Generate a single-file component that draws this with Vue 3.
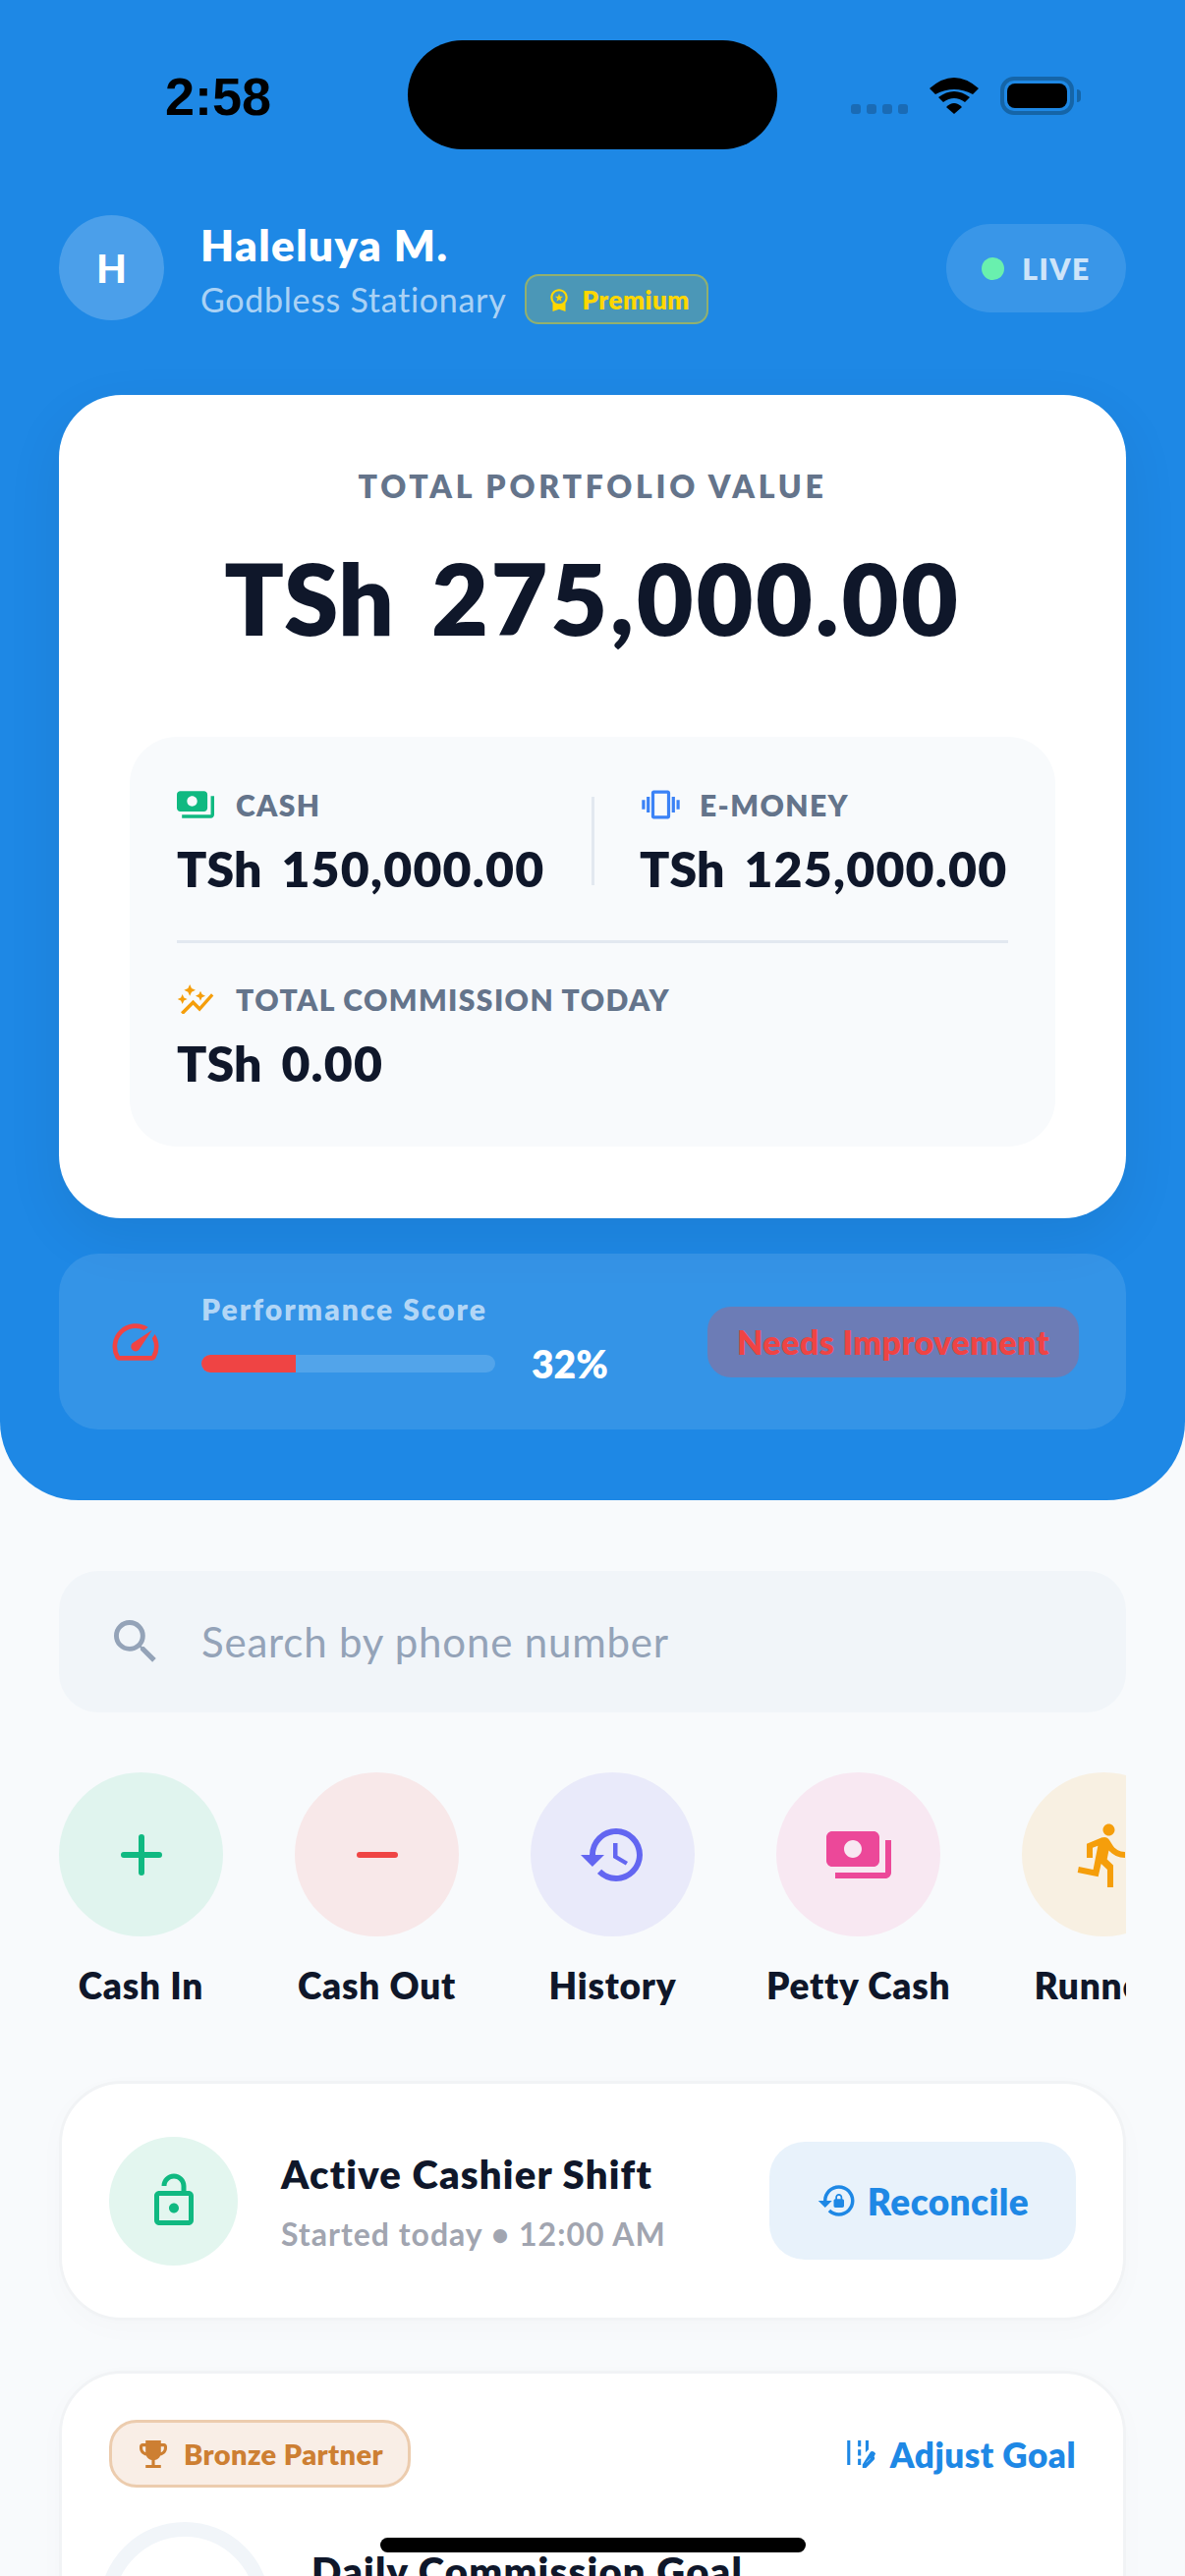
<script setup>
const actions = [
  { label: 'Cash In', kind: 'in' },
  { label: 'Cash Out', kind: 'out' },
  { label: 'History', kind: 'history' },
  { label: 'Petty Cash', kind: 'petty' },
  { label: 'Runners', kind: 'runner' }
]
const paths = {
  history: 'M13 3a9 9 0 0 0-9 9H1l3.89 3.89.07.14L9 12H6c0-3.87 3.13-7 7-7s7 3.13 7 7-3.13 7-7 7c-1.93 0-3.68-.79-4.94-2.06l-1.42 1.42A8.954 8.954 0 0 0 13 21a9 9 0 0 0 0-18zm-1 5v5l4.28 2.54.72-1.21-3.5-2.08V8H12z',
  petty: 'M19 14V6c0-1.1-.9-2-2-2H3c-1.1 0-2 .9-2 2v8c0 1.1.9 2 2 2h14c1.1 0 2-.9 2-2zm-9-1c-1.66 0-3-1.34-3-3s1.34-3 3-3 3 1.34 3 3-1.34 3-3 3zm13-6v11c0 1.1-.9 2-2 2H4v-2h17V7h2z',
  runner: 'M13.49 5.48c1.1 0 2-.9 2-2s-.9-2-2-2-2 .9-2 2 .9 2 2 2zm-3.6 13.9l1-4.4 2.1 2v6h2v-7.5l-2.1-2 .6-3c1.3 1.5 3.3 2.5 5.5 2.5v-2c-1.9 0-3.5-1-4.3-2.4l-1-1.6c-.4-.6-1-1-1.7-1-.3 0-.5.1-.8.1l-5.2 2.2v4.7h2v-3.4l1.8-.7-1.6 8.1-4.9-1-.4 2 7 1.4z',
  in: 'M18 11h-5V6a1 1 0 0 0-2 0v5H6a1 1 0 0 0 0 2h5v5a1 1 0 0 0 2 0v-5h5a1 1 0 0 0 0-2z',
  out: 'M6 11h12a1 1 0 0 1 0 2H6a1 1 0 0 1 0-2z'
}
</script>

<template>
  <div class="page">
    <div class="hero">
      <div class="status">
        <span class="time">2:58</span>
        <div class="status-right">
          <div class="signal"><i></i><i></i><i></i><i></i></div>
          <svg class="wifi" viewBox="0 0 50 38"><path d="M0 11Q25-11 50 11L44 17Q25 7 6 17Z"/><path d="M9 20Q25 8 41 20L36 25Q25 17 14 25Z"/><path d="M17 30Q25 22 33 30L25 37Z"/></svg>
          <div class="battery"><span></span></div>
        </div>
      </div>
      <div class="island"></div>

      <div class="user-row">
        <div class="avatar">H</div>
        <div class="user-info">
          <div class="user-name">Haleluya M.</div>
          <div class="user-sub">
            <span>Godbless Stationary</span>
            <span class="premium">
              <svg viewBox="0 0 24 24"><path d="M9.680 13.690L12 11.930l2.310 1.760-.88-2.850L15.750 9h-2.840L12 6.190 11.090 9H8.250l2.310 1.840-.88 2.850zM20 10c0-4.420-3.580-8-8-8s-8 3.580-8 8c0 2.030.76 3.870 2 5.280V23l6-2 6 2v-7.720c1.240-1.410 2-3.250 2-5.280zm-8-6c3.310 0 6 2.690 6 6s-2.690 6-6 6-6-2.690-6-6 2.690-6 6-6z"/></svg>
              Premium
            </span>
          </div>
        </div>
        <div class="live"><i></i>LIVE</div>
      </div>

      <div class="balance-card">
        <div class="balance-title">TOTAL PORTFOLIO VALUE</div>
        <div class="balance-amount"><span>TSh</span><span class="num">275,000.00</span></div>
        <div class="breakdown">
          <div class="split">
            <div class="split-col">
              <div class="mini-label">
                <svg class="cash-ic" viewBox="1 4 22 16"><path d="M19 14V6c0-1.100-.9-2-2-2H3c-1.100 0-2 .9-2 2v8c0 1.100.9 2 2 2h14c1.100 0 2-.9 2-2zm-9-1c-1.660 0-3-1.340-3-3s1.340-3 3-3 3 1.340 3 3-1.340 3-3 3zm13-6v11c0 1.100-.9 2-2 2H4v-2h17V7h2z"/></svg>
                CASH
              </div>
              <div class="mini-amount"><span>TSh</span><span class="num">150,000.00</span></div>
            </div>
            <div class="split-line"></div>
            <div class="split-col second">
              <div class="mini-label">
                <svg class="vib-ic" viewBox="0 2 24 20"><path d="M0 15h2V9H0v6zm3 2h2V7H3v10zm19-8v6h2V9h-2zm-3 8h2V7h-2v10zM16.500 3h-9C6.670 3 6 3.670 6 4.500v15c0 .83.67 1.500 1.500 1.500h9c.83 0 1.500-.67 1.500-1.500v-15c0-.83-.67-1.500-1.500-1.500zM16 19H8V5h8v14z"/></svg>
                E-MONEY
              </div>
              <div class="mini-amount"><span>TSh</span><span class="num">125,000.00</span></div>
            </div>
          </div>
          <div class="rule"></div>
          <div class="mini-label">
            <svg class="graph-ic" viewBox="1 2 22 18"><path d="M14.060 9.940L12 9l2.060-.94L15 6l.94 2.060L18 9l-2.060.94L15 12zM4 14l.94-2.060L7 11l-2.060-.94L4 8l-.94 2.060L1 11l2.060.94zm4.500-5l1.090-2.410L12 5.500 9.590 4.410 8.500 2 7.410 4.410 5 5.500l2.410 1.090zm-4 11.500l6-6.010 4 4L23 8.930l-1.410-1.410-7.090 7.970-4-4L3 19z"/></svg>
            TOTAL COMMISSION TODAY
          </div>
          <div class="mini-amount"><span>TSh</span><span class="num">0.00</span></div>
        </div>
      </div>

      <div class="perf">
        <svg class="perf-ic" viewBox="2 3.500 20 17"><path d="M20.380 8.570l-1.230 1.850a8 8 0 0 1-.22 7.580H5.070A8 8 0 0 1 15.580 6.850l1.850-1.230A10 10 0 0 0 3.350 19a2 2 0 0 0 1.720 1h13.850a2 2 0 0 0 1.740-1 10 10 0 0 0-.27-10.440zm-9.790 6.840a2 2 0 0 0 2.830 0l5.660-8.490-8.490 5.660a2 2 0 0 0 0 2.830z"/></svg>
        <div class="perf-mid">
          <div class="perf-label">Performance Score</div>
          <div class="perf-bar-row">
            <div class="track"><div class="fill" :style="{ width: '32%' }"></div></div>
            <span class="perf-val">32%</span>
          </div>
        </div>
        <div class="needs">Needs Improvement</div>
      </div>
    </div>

    <div class="search">
      <svg viewBox="3 3 18 18"><path d="M15.500 14h-.79l-.28-.27A6.471 6.471 0 0 0 16 9.500 6.500 6.500 0 1 0 9.500 16c1.610 0 3.090-.59 4.230-1.570l.27.28v.79l5 4.990L20.490 19l-4.990-5zm-6 0C7.010 14 5 11.990 5 9.500S7.010 5 9.500 5 14 7.010 14 9.500 11.990 14 9.500 14z"/></svg>
      <span>Search by phone number</span>
    </div>

    <div class="actions">
      <div v-for="a in actions" :key="a.label" class="action">
        <div class="action-circle" :class="a.kind">
          <svg viewBox="0 0 24 24"><path :d="paths[a.kind]"/></svg>
        </div>
        <div class="action-label">{{ a.label }}</div>
      </div>
    </div>

    <div class="shift card">
      <div class="shift-ic">
        <svg viewBox="0 0 24 24"><path d="M12 17c1.100 0 2-.9 2-2s-.9-2-2-2-2 .9-2 2 .9 2 2 2zm6-9h-1V6c0-2.760-2.240-5-5-5S7 3.240 7 6h2c0-1.660 1.340-3 3-3s3 1.340 3 3v2H6c-1.100 0-2 .9-2 2v10c0 1.100.9 2 2 2h12c1.100 0 2-.9 2-2V10c0-1.100-.9-2-2-2zm0 12H6V10h12v10z"/></svg>
      </div>
      <div class="shift-text">
        <div class="shift-title">Active Cashier Shift</div>
        <div class="shift-sub">Started today • 12:00 AM</div>
      </div>
      <div class="reconcile">
        <svg viewBox="0 0 24 24"><path d="M13 3c-4.970 0-9 4.030-9 9H1l4 4 4-4H6c0-3.860 3.140-7 7-7s7 3.140 7 7-3.140 7-7 7c-1.900 0-3.620-.76-4.880-1.990L6.700 18.420C8.320 20.010 10.550 21 13 21c4.970 0 9-4.030 9-9s-4.030-9-9-9zm2 8v-1c0-1.100-.9-2-2-2s-2 .9-2 2v1c-.55 0-1 .45-1 1v3c0 .55.45 1 1 1h4c.55 0 1-.45 1-1v-3c0-.55-.45-1-1-1zm-1 0h-2v-1c0-.55.45-1 1-1s1 .45 1 1v1z"/></svg>
        Reconcile
      </div>
    </div>

    <div class="goal card">
      <div class="goal-top">
        <div class="bronze">
          <svg viewBox="3 3 18 18"><path d="M19 5h-2V3H7v2H5c-1.100 0-2 .9-2 2v1c0 2.550 1.920 4.630 4.390 4.940.63 1.500 1.980 2.630 3.610 2.960V19H7v2h10v-2h-4v-3.100c1.630-.33 2.980-1.460 3.610-2.960C19.080 12.630 21 10.550 21 8V7c0-1.100-.9-2-2-2zM5 8V7h2v3.820C5.840 10.400 5 9.300 5 8zm14 0c0 1.300-.84 2.400-2 2.820V7h2v1z"/></svg>
          Bronze Partner
        </div>
        <div class="adjust">
          <svg viewBox="4 4 19 18"><path d="M18 4h-2v7.900l2-2V4zM6 4H4v16h2V4zm7 0h-2v4h2V4zm0 6h-2v4h2v-4zm0 6h-2v4h2v-4zm9.560-3.410l-1.150-1.150c-.59-.59-1.540-.59-2.120 0L14 19.710V22h2.290l5.270-5.270c.59-.59.59-1.540 0-2.120zm-5.900 5.900h-.15v-.15l2.650-2.650.15.15-2.650 2.650z"/></svg>
          Adjust Goal
        </div>
      </div>
      <div class="goal-body">
        <div class="ring"></div>
        <div class="goal-title">Daily Commission Goal</div>
      </div>
    </div>

    <div class="home-bar"></div>
  </div>
</template>

<style scoped>
.page {
  position: relative;
  width: 1206px;
  height: 2622px;
  overflow: hidden;
  background: #f8fafc;
  font-family: Lato, "Open Sans", sans-serif;
  color: #0f172a;
}
.hero {
  height: 1527px;
  box-sizing: border-box;
  background: #1e88e5;
  border-radius: 0 0 80px 80px;
  padding: 0 60px;
  color: #fff;
}
.status {
  height: 219px;
  box-sizing: border-box;
  padding: 71px 53px 0 108px;
  display: flex;
  justify-content: space-between;
  align-items: flex-start;
}
.time {
  font: 700 54px/54px "Liberation Sans", sans-serif;
  color: #000;
}
.status-right {
  display: flex;
  align-items: center;
  gap: 22px;
  padding-top: 7px;
}
.signal {
  display: flex;
  gap: 6px;
  padding-top: 27px;
}
.signal i {
  width: 10px;
  height: 10px;
  border-radius: 3px;
  background: #1a6bb5;
}
.wifi {
  width: 50px;
  height: 38px;
  fill: #000;
}
.battery {
  position: relative;
  box-sizing: border-box;
  width: 75px;
  height: 39px;
  border: 4px solid #1565a8;
  border-radius: 14px;
  padding: 3px;
}
.battery span {
  display: block;
  height: 100%;
  background: #000;
  border-radius: 8px;
}
.battery::after {
  content: "";
  position: absolute;
  right: -11px;
  top: 9px;
  width: 4px;
  height: 13px;
  border-radius: 0 6px 6px 0;
  background: #1565a8;
}
.island {
  position: absolute;
  left: 415px;
  top: 41px;
  width: 376px;
  height: 111px;
  border-radius: 56px;
  background: #000;
}
.user-row {
  display: flex;
  align-items: flex-start;
  height: 107px;
}
.avatar {
  width: 107px;
  height: 107px;
  border-radius: 50%;
  background: rgba(255,255,255,.2);
  display: flex;
  align-items: center;
  justify-content: center;
  font-size: 40px;
  font-weight: 900;
  flex-shrink: 0;
}
.user-info {
  margin-left: 37px;
  flex: 1;
}
.user-name {
  font-size: 44px;
  line-height: 50px;
  font-weight: 800;
  letter-spacing: 1.4px;
  margin-top: 5px;
}
.user-sub {
  display: flex;
  align-items: center;
  gap: 19px;
  margin-top: 5px;
  font-size: 34px;
  letter-spacing: .7px;
  color: rgba(255,255,255,.65);
}
.premium {
  display: flex;
  align-items: center;
  gap: 10px;
  height: 51px;
  box-sizing: border-box;
  padding: 0 17px 0 20px;
  border: 2px solid rgba(255,215,0,.4);
  border-radius: 14px;
  background: rgba(255,215,0,.2);
  color: #ffd700;
  font-size: 26px;
  letter-spacing: .5px;
  font-weight: 800;
}
.premium svg {
  width: 26px;
  height: 32px;
  fill: #ffd700;
}
.live {
  width: 183px;
  height: 90px;
  margin-top: 9px;
  border-radius: 45px;
  background: rgba(255,255,255,.12);
  display: flex;
  align-items: center;
  justify-content: center;
  gap: 18px;
  font-size: 30px;
  letter-spacing: 1.5px;
  font-weight: 800;
  color: rgba(255,255,255,.75);
}
.live i {
  width: 23px;
  height: 23px;
  border-radius: 50%;
  background: #69f0ae;
}
.balance-card {
  margin-top: 76px;
  height: 838px;
  box-sizing: border-box;
  background: #fff;
  border-radius: 64px;
  padding: 75px 72px 0;
  box-shadow: 0 20px 60px rgba(0,0,0,.07);
  color: #0f172a;
}
.balance-title {
  text-align: center;
  font-size: 32px;
  line-height: 36px;
  font-weight: 800;
  letter-spacing: 3.7px;
  color: #64748b;
}
.balance-amount {
  display: flex;
  justify-content: center;
  gap: 38px;
  margin-top: 35px;
  font-size: 100px;
  line-height: 120px;
  font-weight: 800;
}
.balance-amount .num {
  letter-spacing: 2.7px;
}
.breakdown {
  margin-top: 82px;
  height: 417px;
  box-sizing: border-box;
  background: #f8fafc;
  border-radius: 48px;
  padding: 49px 48px 0;
}
.split {
  display: flex;
  align-items: center;
}
.split-col {
  width: 422px;
  flex-shrink: 0;
}
.split-col.second {
  width: auto;
  padding-left: 46px;
  white-space: nowrap;
}
.split-line {
  width: 3px;
  height: 90px;
  background: #e2e8f0;
}
.mini-label {
  display: flex;
  align-items: center;
  font-size: 30px;
  line-height: 40px;
  font-weight: 800;
  letter-spacing: 1.4px;
  color: #64748b;
}
.mini-label svg {
  flex-shrink: 0;
  margin-right: 22px;
}
.cash-ic {
  width: 38px;
  height: 28px;
  fill: #10b981;
}
.vib-ic {
  width: 43px;
  height: 32px;
  margin-right: 18px !important;
  fill: #3b82f6;
}
.graph-ic {
  width: 38px;
  height: 30px;
  fill: #f59e0b;
}
.mini-amount {
  display: flex;
  gap: 20px;
  margin-top: 17px;
  font-size: 50px;
  line-height: 56px;
  font-weight: 800;
  color: #0f172a;
}
.mini-amount .num {
  letter-spacing: 1.2px;
}
.rule {
  height: 3px;
  background: #e2e8f0;
  margin: 45px 0 37px;
}
.perf {
  margin-top: 36px;
  height: 179px;
  box-sizing: border-box;
  border-radius: 40px;
  background: rgba(255,255,255,.1);
  padding: 0 48px 0 53px;
  display: flex;
  align-items: center;
}
.perf-ic {
  width: 50px;
  height: 40px;
  fill: #ef4444;
  flex-shrink: 0;
}
.perf-mid {
  margin-left: 42px;
  margin-bottom: 7px;
  flex: 1;
}
.perf-label {
  font-size: 30px;
  line-height: 36px;
  font-weight: 800;
  letter-spacing: 2px;
  color: rgba(255,255,255,.65);
}
.perf-bar-row {
  display: flex;
  align-items: center;
  gap: 37px;
  margin-top: 15px;
}
.track {
  width: 299px;
  height: 18px;
  border-radius: 9px;
  background: rgba(255,255,255,.15);
  overflow: hidden;
}
.fill {
  height: 100%;
  background: #ef4444;
}
.perf-val {
  font-size: 39px;
  font-weight: 800;
}
.needs {
  width: 378px;
  height: 72px;
  border-radius: 24px;
  background: rgba(239,68,68,.3);
  display: flex;
  align-items: center;
  justify-content: center;
  font-size: 34px;
  letter-spacing: .4px;
  font-weight: 800;
  color: #ef4444;
  white-space: nowrap;
}
.search {
  margin: 72px 60px 0;
  height: 144px;
  border-radius: 40px;
  background: #f1f5f9;
  display: flex;
  align-items: center;
  padding-left: 56px;
  font-size: 42px;
  letter-spacing: .8px;
  color: #94a3b8;
}
.search svg {
  width: 44px;
  height: 44px;
  fill: #94a3b8;
  margin-right: 45px;
}
.actions {
  margin: 61px 60px 0;
  display: flex;
  gap: 73px;
  overflow: hidden;
}
.action {
  display: flex;
  flex-direction: column;
  align-items: center;
  flex-shrink: 0;
  min-width: 167px;
}
.action-circle {
  width: 167px;
  height: 167px;
  border-radius: 50%;
  display: flex;
  align-items: center;
  justify-content: center;
}
.action-circle svg {
  width: 72px;
  height: 72px;
}
.in { background: #e0f4ee; fill: #10b981; }
.out { background: #f8e8e9; fill: #ef4444; }
.history { background: #e9eafa; fill: #6366f1; }
.petty { background: #f8e8f2; fill: #ec4899; }
.runner { background: #f8f0e2; fill: #f59e0b; }
.action-label {
  margin-top: 28px;
  font-size: 37px;
  line-height: 44px;
  letter-spacing: .8px;
  font-weight: 800;
  white-space: nowrap;
}
.card {
  margin: 0 60px;
  box-sizing: border-box;
  background: #fff;
  border: 3px solid #f1f3f5;
  border-radius: 64px;
  box-shadow: 0 8px 30px rgba(15,23,42,.02);
}
.shift {
  margin-top: 75px;
  height: 244px;
  display: flex;
  align-items: center;
  padding: 0 48px;
}
.shift-ic {
  width: 131px;
  height: 131px;
  border-radius: 50%;
  background: #e3f6ef;
  display: flex;
  align-items: center;
  justify-content: center;
  flex-shrink: 0;
}
.shift-ic svg {
  width: 60px;
  height: 60px;
  fill: #10b981;
}
.shift-text {
  margin-left: 44px;
  padding-top: 3px;
  flex: 1;
}
.shift-title {
  font-size: 40px;
  line-height: 48px;
  letter-spacing: 1.2px;
  font-weight: 800;
  white-space: nowrap;
}
.shift-sub {
  margin-top: 17px;
  font-size: 32px;
  line-height: 40px;
  letter-spacing: 1px;
  font-weight: 700;
  white-space: nowrap;
  color: #a1a5b0;
}
.reconcile {
  width: 312px;
  height: 120px;
  border-radius: 36px;
  background: #e8f2fb;
  display: flex;
  align-items: center;
  justify-content: center;
  gap: 10px;
  font-size: 37px;
  letter-spacing: .4px;
  font-weight: 800;
  color: #1e88e5;
  flex-shrink: 0;
}
.reconcile svg {
  width: 42px;
  height: 42px;
  fill: #1e88e5;
}
.goal {
  margin-top: 51px;
  height: 500px;
  padding: 47px 48px 0;
}
.goal-top {
  display: flex;
  align-items: center;
  justify-content: space-between;
}
.bronze {
  display: flex;
  align-items: center;
  gap: 17px;
  height: 69px;
  box-sizing: border-box;
  padding: 0 25px 0 28px;
  border: 3px solid #ecccae;
  border-radius: 28px;
  background: #f9eee6;
  font-size: 29px;
  letter-spacing: .4px;
  font-weight: 800;
  color: #cd7f32;
}
.bronze svg {
  width: 28px;
  height: 30px;
  fill: #cd7f32;
}
.adjust {
  display: flex;
  align-items: center;
  gap: 14px;
  font-size: 35px;
  letter-spacing: .5px;
  font-weight: 800;
  color: #1e88e5;
}
.adjust svg {
  width: 30px;
  height: 28px;
  fill: #1e88e5;
}
.goal-body {
  display: flex;
  margin-top: 35px;
}
.ring {
  box-sizing: border-box;
  width: 174px;
  height: 174px;
  border-radius: 50%;
  border: 15px solid #f1f5f9;
  flex-shrink: 0;
  margin-left: -10px;
}
.goal-title {
  margin: 26px 0 0 42px;
  font-size: 40px;
  line-height: 48px;
  letter-spacing: 1.2px;
  font-weight: 800;
}
.home-bar {
  position: absolute;
  left: 387px;
  top: 2583px;
  width: 433px;
  height: 15px;
  border-radius: 8px;
  background: #000;
}
</style>
